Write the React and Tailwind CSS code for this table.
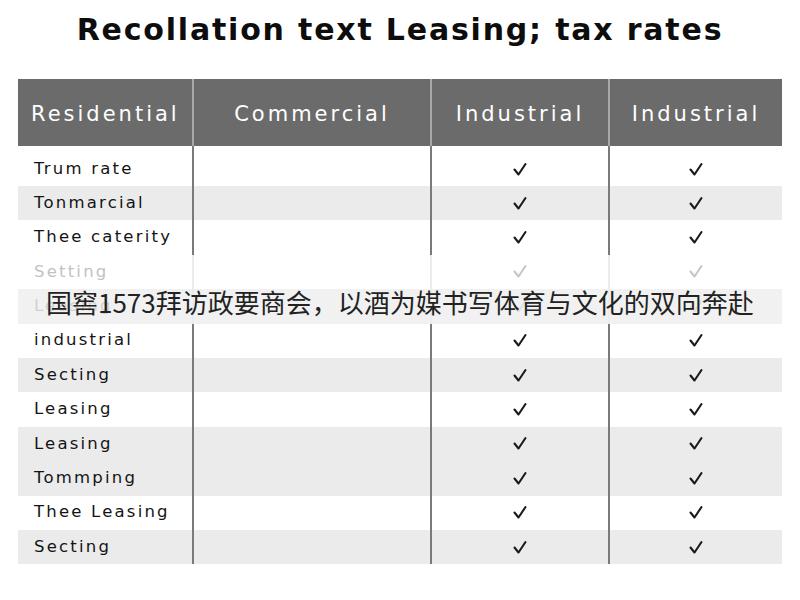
import React from "react";

const rows = [
  { label: "Trum rate", gray: false },
  { label: "Tonmarcial", gray: true },
  { label: "Thee caterity", gray: false },
  { label: "Setting", gray: false, faded: 1 },
  { label: "Leasing", gray: true, faded: 2 },
  { label: "industrial", gray: false },
  { label: "Secting", gray: true },
  { label: "Leasing", gray: false },
  { label: "Leasing", gray: true },
  { label: "Tommping", gray: true },
  { label: "Thee Leasing", gray: false },
  { label: "Secting", gray: true },
];

function Check({ color }) {
  return (
    <svg width="16" height="15" viewBox="0 0 16 15" fill="none">
      <polyline
        points="2.5,7.5 6.5,12.5 13.5,2"
        stroke={color}
        strokeWidth="2.1"
        strokeLinecap="round"
        strokeLinejoin="round"
      />
    </svg>
  );
}

export default function App() {
  return (
    <div className="relative w-[800px] h-[600px] bg-white font-['DejaVu_Sans',sans-serif] overflow-hidden">
      <h1 className="pt-[10px] h-[79px] text-center text-[30px] leading-[40px] font-bold tracking-[1.8px] text-[#0d0d0d]">
        Recollation text Leasing; tax rates
      </h1>

      <div className="mx-[18px] w-[764px]">
        <div className="grid grid-cols-[174px_238px_178px_174px] h-[67px] bg-[#6b6b6b] text-white text-[21px] tracking-[3px]">
          <div className="flex items-center pl-[13px] pt-[4px]">Residential</div>
          <div className="flex items-center justify-center pt-[4px] border-l-2 border-[#a8a8a8]">Commercial</div>
          <div className="flex items-center justify-center pt-[4px] border-l-2 border-[#a8a8a8]">Industrial</div>
          <div className="flex items-center justify-center pt-[4px] border-l-2 border-[#a8a8a8]">Industrial</div>
        </div>

        {rows.map((r, i) => {
          const faded = r.faded;
          const textColor = faded === 1 ? "text-[#c2c2c2]" : faded === 2 ? "text-[#d0d0d0]" : "text-[#141414]";
          const bg = r.gray ? (faded ? "bg-[#f1f1f1]" : "bg-[#ebebeb]") : "bg-white";
          const divider = faded ? "border-[#ececec]" : "border-[#7a7a7a]";
          const checkColor = faded === 1 ? "#c6c6c6" : faded === 2 ? "#e0e0e0" : "#1a1a1a";
          const first = i === 0;
          return (
            <div
              key={i}
              className={`grid grid-cols-[174px_238px_178px_174px] ${first ? "h-[40px]" : "h-[34.4px]"} ${bg}`}
            >
              <div className={`flex items-center pl-[16px] ${first ? "pt-[6px]" : ""} text-[16.5px] tracking-[2.2px] ${textColor}`}>
                {r.label}
              </div>
              <div className={`border-l-2 ${divider}`}></div>
              <div className={`flex items-center justify-center border-l-2 ${divider} ${first ? "pt-[6px]" : ""}`}>
                <Check color={checkColor} />
              </div>
              <div className={`flex items-center justify-center border-l-2 ${divider} ${first ? "pt-[6px]" : ""}`}>
                <Check color={checkColor} />
              </div>
            </div>
          );
        })}
      </div>

      <div className="absolute left-[46px] top-[284px] text-[26px] leading-[36px] text-[#222] font-['Noto_Sans_CJK_SC','Noto_Sans',sans-serif] whitespace-nowrap">
        国窖1573拜访政要商会，以酒为媒书写体育与文化的双向奔赴
      </div>
    </div>
  );
}
